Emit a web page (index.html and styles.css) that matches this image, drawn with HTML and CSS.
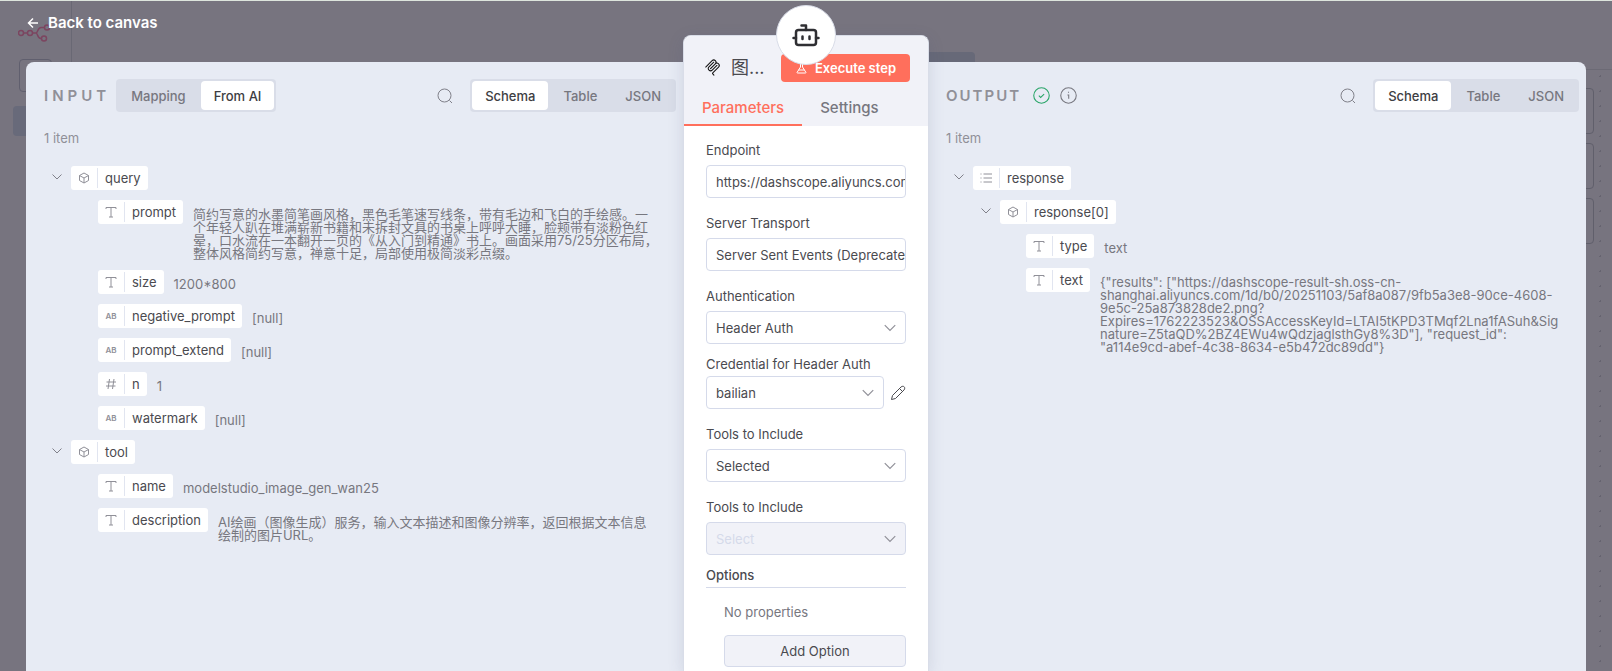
FILE: index.html
```html
<!DOCTYPE html>
<html lang="en">
<head>
  <meta charset="utf-8">
  <title>Back to canvas</title>
  <link rel="stylesheet" href="styles.css">
</head>
<body>
  <!-- shared icons -->
  <svg width="0" height="0" class="sprite">
    <symbol id="i-chevron" viewBox="0 0 12 12"><path d="M1.5 3.5 6 8l4.5-4.5"/></symbol>
    <symbol id="i-cube" viewBox="0 0 24 24"><path d="M12 2 21 7v10l-9 5-9-5V7zM3 7l9 5 9-5M12 12v10"/></symbol>
    <symbol id="i-text" viewBox="0 0 12 12"><path d="M1 3V1.5h10V3M6 1.5V11M4 11h4"/></symbol>
    <symbol id="i-hash" viewBox="0 0 12 12"><path d="M4.5 1 3 11M9 1 7.5 11M1.5 4H11M1 8h9.5"/></symbol>
    <symbol id="i-list" viewBox="0 0 12 12"><path d="M3.5 2H12M3.5 6H12M3.5 10H12M.5 2h1M.5 6h1M.5 10h1"/></symbol>
    <symbol id="i-search" viewBox="0 0 16 16"><circle cx="7.5" cy="7.5" r="6.5"/><path d="m12.5 12.5 2.5 2.5"/></symbol>
  </svg>

  <!-- editor behind the dialog -->
  <div class="editor">
    <div class="sidebar">
      <svg class="logo" viewBox="0 0 34 18" width="34" height="18">
        <g fill="none" stroke="#7c4560" stroke-width="1.5">
          <circle cx="3" cy="9" r="2.5"/><circle cx="12" cy="9" r="2.5"/>
          <circle cx="29" cy="3.5" r="2.5"/><circle cx="26" cy="14.5" r="2.5"/>
          <path d="M5.5 9h4M14.5 9H18c2 0 1.5-5.5 5-5.5h3.5M18 9c2 0 1 5.5 5 5.5"/>
        </g>
      </svg>
      <div class="sidebar-box"></div>
      <div class="sidebar-active"></div>
    </div>
    <div class="canvas">
      <div class="topbar"><span class="switcher"></span></div>
      <div class="side-cards">
        <span></span><span></span><span></span>
      </div>
    </div>
  </div>

  <div class="ndv">
    <button class="back" type="button">
      <svg width="12" height="12" viewBox="0 0 12 12"><path d="M11 6H1.5M6 1.5 1.5 6 6 10.5"/></svg>
      Back to canvas
    </button>

    <section class="panel input-panel">
      <div class="panel-head">
        <h2 class="panel-title">INPUT</h2>
        <div class="tabs">
          <button type="button">Mapping</button>
          <button type="button" class="active">From AI</button>
        </div>
        <button type="button" class="search" aria-label="Search"><svg width="16" height="16"><use href="#i-search"/></svg></button>
        <div class="tabs">
          <button type="button" class="active">Schema</button>
          <button type="button">Table</button>
          <button type="button">JSON</button>
        </div>
      </div>
      <p class="count">1 item</p>
      <div class="tree">
        <div class="row">
          <svg class="fold"><use href="#i-chevron"/></svg>
          <span class="pill"><svg class="type big"><use href="#i-cube"/></svg><span>query</span></span>
        </div>
        <div class="row lvl1">
          <span class="pill"><svg class="type"><use href="#i-text"/></svg><span>prompt</span></span>
          <span class="value">简约写意的水墨简笔画风格，黑色毛笔速写线条，带有毛边和飞白的手绘感。一个年轻人趴在堆满崭新书籍和未拆封文具的书桌上呼呼大睡，脸颊带有淡粉色红晕，口水流在一本翻开一页的《从入门到精通》书上。画面采用75/25分区布局，整体风格简约写意，禅意十足，局部使用极简淡彩点缀。</span>
        </div>
        <div class="row lvl1">
          <span class="pill"><svg class="type"><use href="#i-text"/></svg><span>size</span></span>
          <span class="value">1200*800</span>
        </div>
        <div class="row lvl1">
          <span class="pill"><b class="type">AB</b><span>negative_prompt</span></span>
          <span class="value">[null]</span>
        </div>
        <div class="row lvl1">
          <span class="pill"><b class="type">AB</b><span>prompt_extend</span></span>
          <span class="value">[null]</span>
        </div>
        <div class="row lvl1">
          <span class="pill"><svg class="type"><use href="#i-hash"/></svg><span>n</span></span>
          <span class="value">1</span>
        </div>
        <div class="row lvl1">
          <span class="pill"><b class="type">AB</b><span>watermark</span></span>
          <span class="value">[null]</span>
        </div>
        <div class="row">
          <svg class="fold"><use href="#i-chevron"/></svg>
          <span class="pill"><svg class="type big"><use href="#i-cube"/></svg><span>tool</span></span>
        </div>
        <div class="row lvl1">
          <span class="pill"><svg class="type"><use href="#i-text"/></svg><span>name</span></span>
          <span class="value">modelstudio_image_gen_wan25</span>
        </div>
        <div class="row lvl1">
          <span class="pill"><svg class="type"><use href="#i-text"/></svg><span>description</span></span>
          <span class="value">AI绘画（图像生成）服务，输入文本描述和图像分辨率，返回根据文本信息绘制的图片URL。</span>
        </div>
      </div>
    </section>

    <section class="main">
      <div class="node-badge">
        <svg width="28" height="28" viewBox="0 0 28 28">
          <g fill="none" stroke="#2f2f33" stroke-width="2.5" stroke-linecap="round" stroke-linejoin="round">
            <rect x="4" y="9" width="20" height="15" rx="2.5"/>
            <path d="M14 9V4.5H9.5M1.5 17H4M24 17h2.5M10.5 15.5V18M17.5 15.5V18"/>
          </g>
        </svg>
      </div>
      <div class="main-head">
        <div class="title-row">
          <svg class="mcp" width="17" height="18" viewBox="0 0 180 190">
            <path d="M18 85 86 17c9-9 25-9 34 0s9 25 0 34L69 102M70 101l50-50c9-9 25-9 34 0s9 25 0 34l-61 61c-3 3-3 8 0 11l12 13M103 34 53 84c-9 9-9 25 0 34s25 9 34 0l50-50"/>
          </svg>
          <h1>图...</h1>
          <button type="button" class="execute">
            <svg width="11" height="12" viewBox="0 0 11 12"><path d="M3.5 1h4M4.5 1v4L1 10.5c0 .3.2.5.5.5h8c.3 0 .5-.2.500-.5L6.5 5V1M2.5 8h6"/></svg>
            Execute step
          </button>
        </div>
        <div class="main-tabs">
          <button type="button" class="active">Parameters</button>
          <button type="button">Settings</button>
        </div>
      </div>
      <form class="params">
        <div class="field">
          <label for="endpoint">Endpoint</label>
          <input id="endpoint" type="text" value="https://dashscope.aliyuncs.com">
        </div>
        <div class="field">
          <label for="transport">Server Transport</label>
          <select id="transport"><option>Server Sent Events (Deprecated)</option></select>
        </div>
        <div class="field tight">
          <label for="auth">Authentication</label>
          <div class="select"><select id="auth"><option>Header Auth</option></select><svg><use href="#i-chevron"/></svg></div>
        </div>
        <div class="field credential">
          <label for="cred">Credential for Header Auth</label>
          <div class="cred-row">
            <div class="select"><select id="cred"><option>bailian</option></select><svg><use href="#i-chevron"/></svg></div>
            <button type="button" class="edit" aria-label="Edit credential">
              <svg width="16" height="16" viewBox="0 0 16 16"><path d="M1.5 14.5l1-4L11 2c2.500-2 5 .5 3 3l-8.500 8.500zM9.500 3.500l3 3"/></svg>
            </button>
          </div>
        </div>
        <div class="field">
          <label for="tools">Tools to Include</label>
          <div class="select"><select id="tools"><option>Selected</option></select><svg><use href="#i-chevron"/></svg></div>
        </div>
        <div class="field tight">
          <label for="tools2">Tools to Include</label>
          <div class="select"><select id="tools2" disabled><option>Select</option></select><svg><use href="#i-chevron"/></svg></div>
        </div>
        <h3>Options</h3>
        <div class="options">
          <p>No properties</p>
          <button type="button">Add Option</button>
        </div>
      </form>
    </section>

    <section class="panel output-panel">
      <div class="panel-head">
        <h2 class="panel-title">OUTPUT</h2>
        <svg class="status ok" viewBox="0 0 16 16"><circle cx="8" cy="8" r="7.3"/><path d="m5.5 8.2 1.700 1.600 3.300-3"/></svg>
        <svg class="status" viewBox="0 0 16 16"><circle cx="8" cy="8" r="7.3"/><path d="M7 7.5h1.200V11M8 4.500v1"/></svg>
        <button type="button" class="search" aria-label="Search"><svg width="16" height="16"><use href="#i-search"/></svg></button>
        <div class="tabs">
          <button type="button" class="active">Schema</button>
          <button type="button">Table</button>
          <button type="button">JSON</button>
        </div>
      </div>
      <p class="count">1 item</p>
      <div class="tree">
        <div class="row">
          <svg class="fold"><use href="#i-chevron"/></svg>
          <span class="pill"><svg class="type"><use href="#i-list"/></svg><span>response</span></span>
        </div>
        <div class="row nested">
          <svg class="fold"><use href="#i-chevron"/></svg>
          <span class="pill"><svg class="type big"><use href="#i-cube"/></svg><span>response[0]</span></span>
        </div>
        <div class="row lvl2">
          <span class="pill"><svg class="type"><use href="#i-text"/></svg><span>type</span></span>
          <span class="value">text</span>
        </div>
        <div class="row lvl2">
          <span class="pill"><svg class="type"><use href="#i-text"/></svg><span>text</span></span>
          <span class="value">{"results": ["https://dashscope-result-sh.oss-cn-shanghai.aliyuncs.com/1d/b0/20251103/5af8a087/9fb5a3e8-90ce-4608-9e5c-25a873828de2.png?Expires=1762223523&amp;OSSAccessKeyId=LTAI5tKPD3TMqf2Lna1fASuh&amp;Signature=Z5taQD%2BZ4EWu4wQdzjaglsthGy8%3D"], "request_id": "a114e9cd-abef-4c38-8634-e5b472dc89dd"}</span>
        </div>
      </div>
    </section>
  </div>
</body>
</html>
```

FILE: styles.css
```css
* {
  box-sizing: border-box;
}
body {
  margin: 0;
  height: 100vh;
  overflow: hidden;
  position: relative;
  font-family: Inter, "Noto Sans CJK SC", sans-serif;
  font-size: 13px;
  line-height: 16px;
  color: #4a4a4f;
  background: #77747f;
}
button, input, select {
  font: inherit;
  color: inherit;
  margin: 0;
}
button {
  border: none;
  background: none;
  padding: 0;
  cursor: pointer;
}
h1, h2, h3, p {
  margin: 0;
}
svg {
  fill: none;
  stroke: currentColor;
  flex: none;
}
.sprite {
  position: absolute;
}

/* dimmed editor */
.editor {
  display: flex;
  height: 100%;
  border-top: 1px solid #dde5dd;
}
.sidebar {
  width: 72px;
  padding: 23px 13px;
  border-right: 1px solid #696874;
}
.logo {
  display: block;
  margin-left: 5px;
}
.sidebar-box {
  width: 33px;
  height: 33px;
  margin: 17px 6px 14px;
  border: 1px solid #605f6e;
  border-radius: 4px;
}
.sidebar-active {
  height: 30px;
  border-radius: 4px;
  background: #686a7a;
}
.canvas {
  flex: 1;
  background: radial-gradient(circle, #666470 1px, transparent 1px) right 4px top 8px / 15px 15px;
}
.topbar {
  display: flex;
  justify-content: center;
  align-items: flex-end;
  height: 69px;
  background: #77747f;
  border-bottom: 1px solid #6c6a75;
}
.switcher {
  width: 266px;
  height: 17px;
  border-radius: 4px 4px 0 0;
  background: #676978;
}
.side-cards {
  display: flex;
  flex-direction: column;
  align-items: flex-end;
  gap: 9px;
  padding: 18px 18px 0 0;
}
.side-cards span {
  width: 60px;
  height: 46px;
  background: #77747f;
  border: 1px solid #605f6b;
  border-radius: 4px;
}

/* node detail dialog */
.ndv {
  position: absolute;
  inset: 0;
  display: grid;
  grid-template-columns: minmax(0, 1fr) 246px minmax(0, 1fr);
  grid-template-rows: 35px 27px minmax(0, 1fr);
  padding: 0 26px;
}
.back {
  grid-area: 1 / 1 / 3 / 2;
  align-self: start;
  justify-self: start;
  display: flex;
  align-items: center;
  gap: 9px;
  margin: 12px 1px;
  font-size: 15px;
  line-height: 22px;
  font-weight: 600;
  color: #fff;
}
.back svg {
  stroke-width: 1.5;
}
.panel {
  grid-row: 3;
  background: #e7ebf4;
}
.input-panel {
  grid-column: 1;
  padding: 17px 7px 0 18px;
  border-radius: 8px 0 0 0;
}
.output-panel {
  grid-column: 3;
  padding: 17px 7px 0 17px;
  border-radius: 0 8px 0 0;
}
.panel-head {
  display: flex;
  align-items: center;
  height: 33px;
}
.panel-title {
  font-size: 15px;
  line-height: 20px;
  font-weight: 600;
  color: #909098;
}
.input-panel .panel-title {
  letter-spacing: 4px;
  margin-right: 6px;
}
.output-panel .panel-title {
  letter-spacing: 2px;
  margin-right: 12px;
}
.tabs {
  display: flex;
  gap: 2px;
  padding: 2px;
  border-radius: 4px;
  background: #d9dde8;
}
.tabs button {
  height: 29px;
  padding: 0 13px;
  border-radius: 4px;
  font-weight: 500;
  color: #77777f;
}
.tabs .active {
  background: #fff;
  color: #3d3d42;
}
.search {
  margin: 0 17px 0 auto;
  height: 16px;
  color: #808089;
}
.status {
  width: 17px;
  height: 17px;
  margin-right: 10px;
  color: #77777f;
}
.status.ok {
  color: #29a568;
}
.count {
  margin: 18px 0 20px;
  color: #909098;
}
.tree {
  display: flex;
  flex-direction: column;
  gap: 10px;
  padding: 0 18px 0 7px;
}
.row {
  display: flex;
  align-items: flex-start;
}
.nested {
  padding-left: 27px;
}
.lvl1 {
  padding-left: 47px;
}
.lvl2 {
  padding-left: 73px;
}
.fold {
  width: 12px;
  height: 12px;
  margin: 5px 8px 0 0;
  color: #808089;
}
.pill {
  display: flex;
  flex: none;
  align-items: center;
  height: 24px;
  padding: 2px 7px 2px 0;
  border-radius: 3px;
  background: #fff;
  line-height: 20px;
}
.pill > span {
  padding-left: 7px;
  border-left: 1px solid #e1e5f0;
}
.type {
  width: 12px;
  height: 12px;
  margin: 0 7px;
  color: #909098;
}
.type.big {
  stroke-width: 2;
}
b.type {
  font-size: 8px;
  line-height: 12px;
  font-weight: 600;
  text-align: center;
}
.value {
  min-width: 0;
  margin-left: 10px;
  padding-top: 8px;
  line-height: 13px;
  color: #77777f;
  overflow-wrap: anywhere;
}

/* middle column */
.main {
  grid-area: 2 / 2 / 4 / 3;
  position: relative;
  border: 1px solid #d9dde8;
  border-bottom: none;
  border-radius: 8px 8px 0 0;
  background: #fff;
  box-shadow: 0 4px 16px rgba(70, 80, 120, 0.15);
}
.node-badge {
  position: absolute;
  top: -31px;
  left: 50%;
  width: 60px;
  height: 60px;
  margin-left: -30px;
  display: flex;
  align-items: center;
  justify-content: center;
  border: 1px solid #d9dde8;
  border-radius: 50%;
  background: #fff;
}
.main-head {
  background: #f1f2f8;
  border-radius: 8px 8px 0 0;
}
.title-row {
  display: flex;
  align-items: center;
  padding: 18px 18px 0 20px;
}
.mcp {
  color: #111;
  stroke-width: 11;
  stroke-linecap: round;
}
h1 {
  margin-left: 10px;
  font-size: 18px;
  line-height: 24px;
  font-weight: 400;
}
.execute {
  display: flex;
  align-items: center;
  gap: 8px;
  height: 28px;
  margin-left: auto;
  padding: 0 14px 0 15px;
  border-radius: 4px;
  background: #ff6f5c;
  color: #fff;
  font-weight: 600;
}
.main-tabs {
  display: flex;
  height: 44px;
}
.main-tabs button {
  padding: 10px 18px 0;
  font-size: 15px;
  font-weight: 500;
  color: #77777f;
  border-bottom: 2px solid transparent;
}
.main-tabs .active {
  color: #ff6f5c;
  border-color: #ff6f5c;
}
.params {
  padding: 16px 22px 0;
}
.field {
  margin-bottom: 17px;
}
.field.tight {
  margin-bottom: 12px;
}
.field label {
  display: block;
  margin-bottom: 7px;
}
.field.credential label {
  margin-bottom: 4px;
}
.field input, .field select {
  display: block;
  width: 100%;
  height: 33px;
  padding: 0 0 0 9px;
  border: 1px solid #d5daea;
  border-radius: 4px;
  background: #fff;
  appearance: none;
}
.field select:disabled {
  background: #f1f2f8;
  color: #d5daea;
  opacity: 1;
}
.select {
  position: relative;
  flex: 1;
}
.select svg {
  position: absolute;
  right: 9px;
  top: 10px;
  width: 14px;
  height: 14px;
  color: #909098;
  pointer-events: none;
}
.cred-row {
  display: flex;
  align-items: center;
  gap: 6px;
}
.edit {
  height: 16px;
}
h3 {
  padding-bottom: 4px;
  border-bottom: 1px solid #d5daea;
  font-size: 13px;
  line-height: 16px;
  font-weight: 500;
}
.options {
  padding: 16px 0 0 18px;
}
.options p {
  color: #77777f;
}
.options button {
  width: 100%;
  height: 32px;
  margin-top: 15px;
  border: 1px solid #d5daea;
  border-radius: 4px;
  background: #f1f2f8;
}
```
